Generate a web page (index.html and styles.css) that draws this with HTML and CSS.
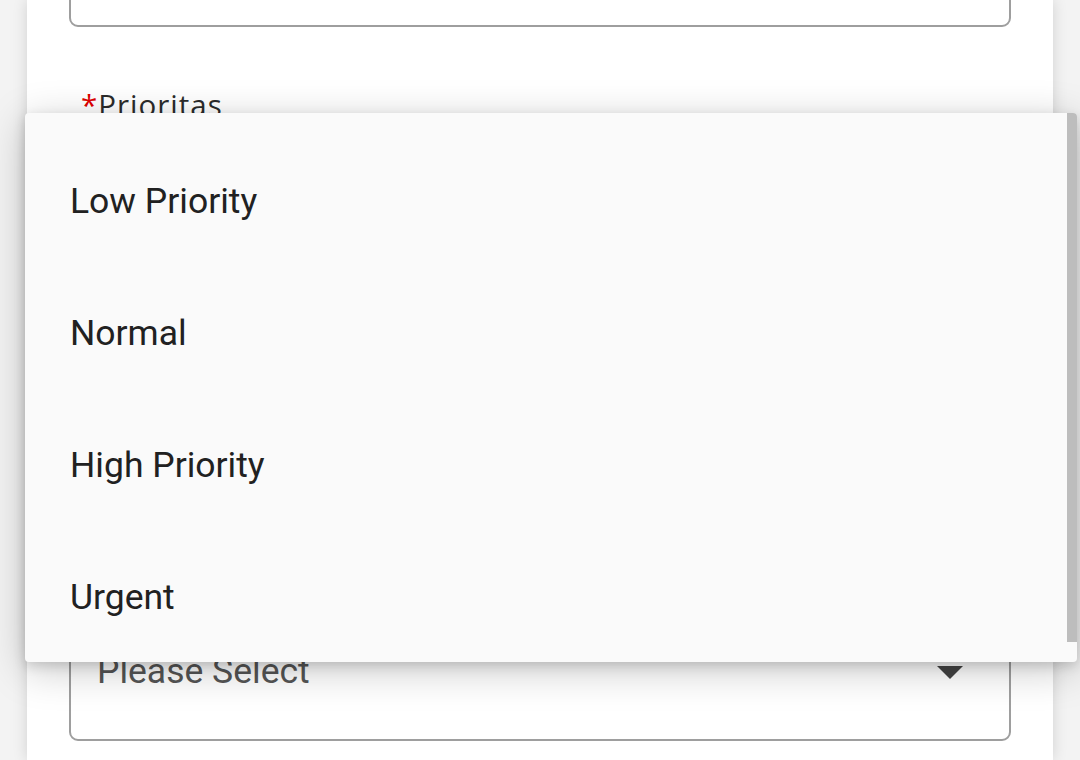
FILE: index.html
```html
<!DOCTYPE html>
<html lang="id">
<head>
  <meta charset="UTF-8" />
  <meta name="viewport" content="width=device-width, initial-scale=1.0" />
  <title>Form Tiket</title>
  <link rel="stylesheet" href="styles.css">
</head>
<body>
  <div class="card">
    <form class="form">
      <div class="group">
        <div class="field"></div>
      </div>

      <div class="group">
        <label class="label"><span class="req">*</span>Prioritas</label>
        <div class="field select">
          <span class="placeholder">Please Select</span>
          <span class="caret"></span>
        </div>
      </div>

      <div class="group">
        <label class="label"><span class="req">*</span>Kategori</label>
        <div class="field select">
          <span class="placeholder">Please Select</span>
          <span class="caret"></span>
        </div>
      </div>

      <div class="group">
        <label class="label"><span class="req">*</span>Sub Kategori</label>
        <div class="field select">
          <span class="placeholder">Please Select</span>
          <span class="caret"></span>
        </div>
      </div>
    </form>
  </div>

  <!-- open menu of the Prioritas select -->
  <div class="menu">
    <ul class="menu-list">
      <li class="menu-item">Low Priority</li>
      <li class="menu-item">Normal</li>
      <li class="menu-item">High Priority</li>
      <li class="menu-item">Urgent</li>
    </ul>
    <div class="menu-thumb"></div>
  </div>
</body>
</html>
```

FILE: styles.css
```css
html, body {
  margin: 0;
  padding: 0;
  height: 100%;
  overflow: hidden;
  background: #f3f3f3;
}

*,
*::before,
*::after {
  box-sizing: border-box;
}

.card {
  display: flow-root;
  margin: 0 27px;
  min-height: 100vh;
  background: #fff;
  box-shadow: 0 0 14px rgba(0, 0, 0, 0.14);
  padding: 0 42px;
}

.form {
  display: flex;
  flex-direction: column;
  gap: 48px;
  margin-top: -111px;
}

.group {
  display: flex;
  flex-direction: column;
}

.label {
  font-family: "Open Sans", Lato, sans-serif;
  font-size: 29.5px;
  letter-spacing: 1px;
  line-height: 40px;
  color: #2b2b2b;
  padding: 10px 0 0 12px;
  margin-bottom: 2px;
}

.req {
  color: #e00000;
  letter-spacing: 0;
  margin-right: 1px;
}

.field {
  height: 138px;
  border: 2px solid #9e9e9e;
  border-radius: 9px;
  background: #fff;
}

.select {
  display: flex;
  align-items: center;
  justify-content: space-between;
  padding: 0 46px 0 26px;
}

.placeholder {
  font-family: Roboto, sans-serif;
  font-size: 35.5px;
  color: #555;
  margin-top: -2px;
}

.caret {
  width: 0;
  height: 0;
  border-left: 13.5px solid transparent;
  border-right: 13.5px solid transparent;
  border-top: 13px solid #444;
}

.menu {
  position: absolute;
  left: 25px;
  top: 113px;
  width: 1052px;
  height: 549px;
  background: #fafafa;
  border-radius: 4px;
  overflow: hidden;
  box-shadow: 0 8px 40px rgba(0, 0, 0, 0.22), 0 4px 12px rgba(0, 0, 0, 0.14);
}

.menu-list {
  list-style: none;
  margin: 0;
  padding: 22px 0 0;
}

.menu-item {
  height: 132px;
  display: flex;
  align-items: center;
  padding-left: 45px;
  font-family: Roboto, sans-serif;
  font-size: 35.5px;
  color: #212121;
}

.menu-thumb {
  position: absolute;
  top: 0;
  right: 0;
  width: 10px;
  height: 529px;
  background: #bdbdbd;
}
```
